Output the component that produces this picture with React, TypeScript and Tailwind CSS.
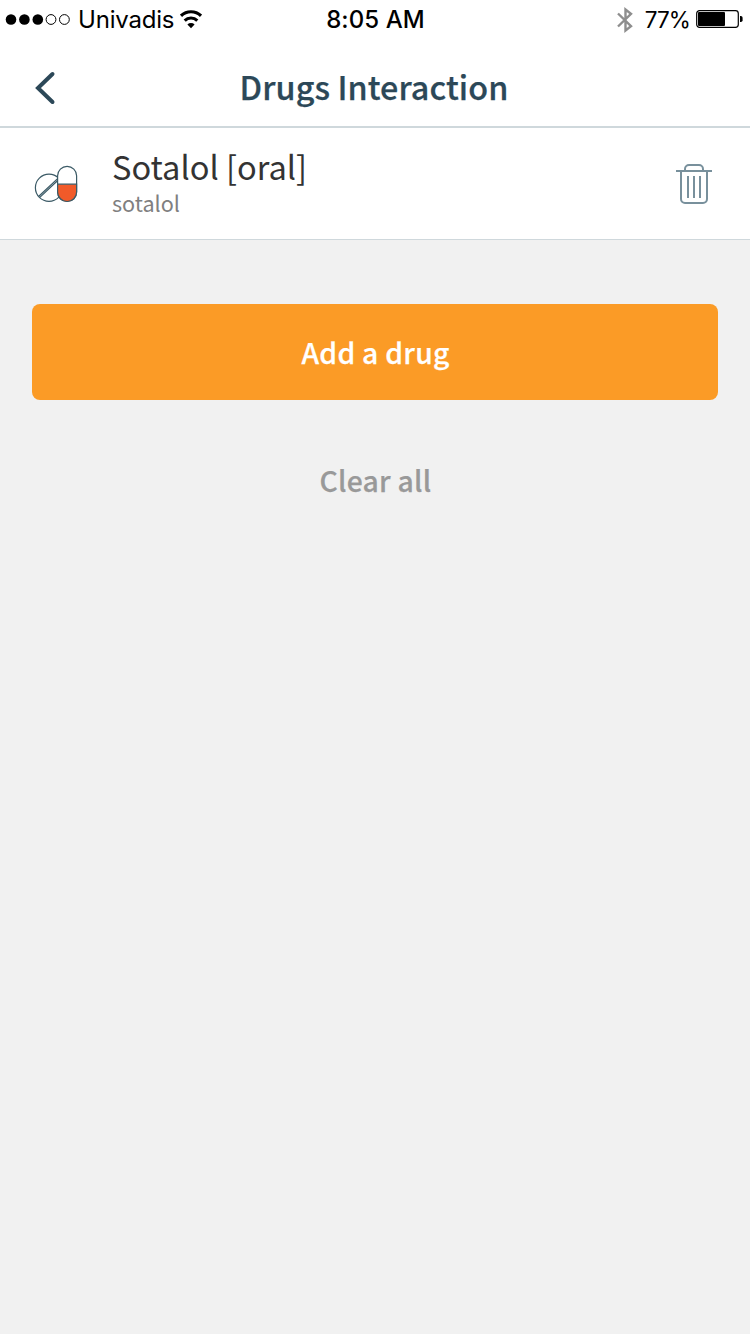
import type { ReactNode } from "react";

type Drug = { name: string; substance: string };

const DRUGS: Drug[] = [{ name: "Sotalol [oral]", substance: "sotalol" }];

export default function App() {
  return (
    <div className="flex min-h-screen w-full flex-col bg-[#f1f1f1] font-['Noto_Sans_CJK_SC',sans-serif]">
      <StatusBar />
      <Header title="Drugs Interaction" />
      <ul>
        {DRUGS.map((d) => (
          <DrugRow key={d.name} drug={d} />
        ))}
      </ul>
      <main className="flex flex-col px-8 pt-16">
        <button className="h-24 rounded-lg bg-[#fb9b26] pl-px text-[28.3px] font-medium tracking-[0.25px] text-white [-webkit-text-stroke:0.25px]">
          Add a drug
        </button>
        <button className="mt-8 h-24 pl-px text-[28.3px] font-medium tracking-[0.25px] text-[#999999] [-webkit-text-stroke:0.25px]">
          Clear all
        </button>
      </main>
    </div>
  );
}

function StatusBar() {
  return (
    <div className="grid h-10 grid-cols-3 items-center bg-white pr-[7px] pl-[5px] font-['Inter',sans-serif] text-2xl text-black">
      <div className="flex items-center">
        <Signal />
        <span className="ml-[7px] tracking-[-0.2px]">Univadis</span>
        <WifiIcon />
      </div>
      <span className="pl-[3px] text-center font-medium tracking-[0.1px]">8:05 AM</span>
      <div className="flex items-center justify-end">
        <BluetoothIcon />
        <span className="ml-3 text-[22.5px] tracking-[-0.9px]">77%</span>
        <BatteryIcon />
      </div>
    </div>
  );
}

function Header({ title }: { title: string }) {
  return (
    <header className="grid h-22 grid-cols-[80px_1fr_80px] items-center border-b-2 border-[#cfd8dc] bg-white">
      <button className="pt-2.5 pl-8" aria-label="Back">
        <svg width="26" height="36" viewBox="0 0 26 36" fill="none" stroke="#2c4858" strokeWidth="4" strokeLinecap="round">
          <path d="M20.5 4 6 18l14.5 14" />
        </svg>
      </button>
      <h1 className="pt-1.5 pr-0.5 text-center text-[32.3px] font-medium tracking-[0.1px] text-[#2c4858] [-webkit-text-stroke:0.25px]">
        {title}
      </h1>
    </header>
  );
}

function DrugRow({ drug }: { drug: Drug }) {
  return (
    <li className="flex h-28 items-center border-b border-[#cfd8dc] bg-white pr-[38px] pl-[34px]">
      <PillsIcon />
      <div className="ml-[34px] flex-1 pb-[5px]">
        <div className="text-[32.6px] leading-[42px] text-[#333333]">{drug.name}</div>
        <div className="pt-px text-[21.6px] leading-[30px] text-[#808080]">{drug.substance}</div>
      </div>
      <button className="pt-0.5" aria-label="Delete">
        <TrashIcon />
      </button>
    </li>
  );
}

function Signal() {
  return (
    <svg width="66" height="12" viewBox="0 0 66 12">
      <circle cx="6" cy="5.5" r="5.3" />
      <circle cx="19.4" cy="5.5" r="5.3" />
      <circle cx="32.8" cy="5.5" r="5.3" />
      <circle cx="46" cy="5.5" r="4.9" fill="none" stroke="#000" />
      <circle cx="59.4" cy="5.5" r="4.9" fill="none" stroke="#000" />
    </svg>
  );
}

function WifiIcon() {
  return (
    <svg className="ml-1.5 shrink-0" width="22" height="20" viewBox="0 0 22 20" fill="none" stroke="#000" strokeWidth="3.1">
      <path d="M1 5.8a14.4 14.4 0 0 1 20 0" />
      <path d="M4.7 10.6a9 9 0 0 1 12.6 0" />
      <path d="M11 18.3 7.4 14.6a5.1 5.1 0 0 1 7.2 0z" fill="#000" stroke="none" />
    </svg>
  );
}

function BluetoothIcon() {
  return (
    <svg width="16" height="26" viewBox="0 0 16 26" fill="none" stroke="#8e8e8e" strokeWidth="2.4">
      <path d="m1 6.5 13 12.7-5.5 4.3v-21L14 6.8 1 19.5" />
    </svg>
  );
}

function BatteryIcon() {
  return (
    <svg className="mb-0.5 ml-1.5 shrink-0" width="47" height="18" viewBox="0 0 47 18">
      <rect x=".7" y=".7" width="41.6" height="16.6" rx="2.8" fill="none" stroke="#000" strokeWidth="1.2" />
      <rect x="2" y="2" width="27" height="14" rx="1" />
      <path d="M44 6h.8a1.8 1.8 0 0 1 1.8 1.8v2.4a1.8 1.8 0 0 1-1.8 1.8H44z" />
    </svg>
  );
}

function PillsIcon() {
  return (
    <Icon width={44} height={38}>
      <circle cx="15" cy="22.8" r="13.6" />
      <path d="m4.8 31.2 18.8-17.6M5.8 32.4 24 15.2" />
      <rect x="23.6" y="1.3" width="19" height="35.2" rx="9.5" fill="#fff" />
      <path d="M23.6 19.2h19v7.8a9.5 9.5 0 0 1-19 0z" fill="#f15a29" />
    </Icon>
  );
}

function Icon({ width, height, children }: { width: number; height: number; children: ReactNode }) {
  return (
    <svg width={width} height={height} viewBox={`0 0 ${width} ${height}`} fill="none" stroke="#3b5a66" strokeWidth="1.2">
      {children}
    </svg>
  );
}

function TrashIcon() {
  return (
    <svg width="36" height="42" viewBox="0 0 36 42" fill="none" stroke="#78909c" strokeWidth="2">
      <path d="M0 7h36M5 7v28a4 4 0 0 0 4 4h18a4 4 0 0 0 4-4V7" />
      <path d="M9 7V5a4 4 0 0 1 4-4h10a4 4 0 0 1 4 4v2" />
      <path d="M12 12v22M18 12v22M24 12v22" />
    </svg>
  );
}
